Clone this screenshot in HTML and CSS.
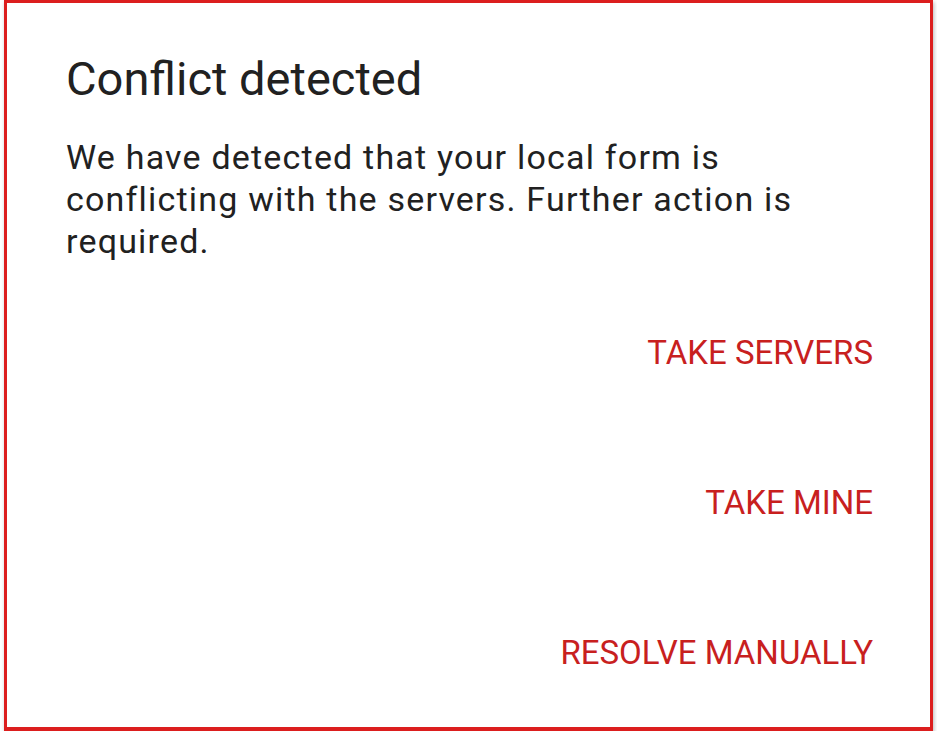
FILE: index.html
```html
<!DOCTYPE html>
<html>
<head>
<meta charset="utf-8">
<link rel="stylesheet" href="styles.css">
</head>
<body>
<div class="dialog">
  <h1 class="title">Conflict detected</h1>
  <p class="message">We have detected that your local form is conflicting with the servers. Further action is required.</p>
  <div class="actions">
    <span class="btn">TAKE SERVERS</span>
    <span class="btn">TAKE MINE</span>
    <span class="btn">RESOLVE MANUALLY</span>
  </div>
</div>
</body>
</html>
```
FILE: styles.css
```css
html, body {
  margin: 0;
  padding: 0;
  background: #ffffff;
}
body {
  font-family: Roboto, "Liberation Sans", Arial, sans-serif;
  color: #212121;
}
.dialog {
  box-sizing: border-box;
  margin-left: 4px;
  width: 929px;
  height: 731px;
  border: 3px solid #dc1e1e;
  border-bottom-width: 4px;
  background: #ffffff;
  box-shadow: 1px 2px 4px rgba(0, 0, 0, 0.28);
  padding: 49px 57px 0 59px;
}
.title {
  margin: 0;
  font-size: 47px;
  line-height: 54px;
  font-weight: 400;
  color: #212121;
}
.message {
  margin: 30px 0 0 0;
  max-width: 770px;
  font-size: 34px;
  line-height: 42px;
  letter-spacing: 1.2px;
  color: #212121;
}
.actions {
  margin-top: 70px;
  display: flex;
  flex-direction: column;
  align-items: flex-end;
  gap: 108px;
}
.btn {
  font-size: 33px;
  line-height: 42px;
  color: #c8201e;
}
```
